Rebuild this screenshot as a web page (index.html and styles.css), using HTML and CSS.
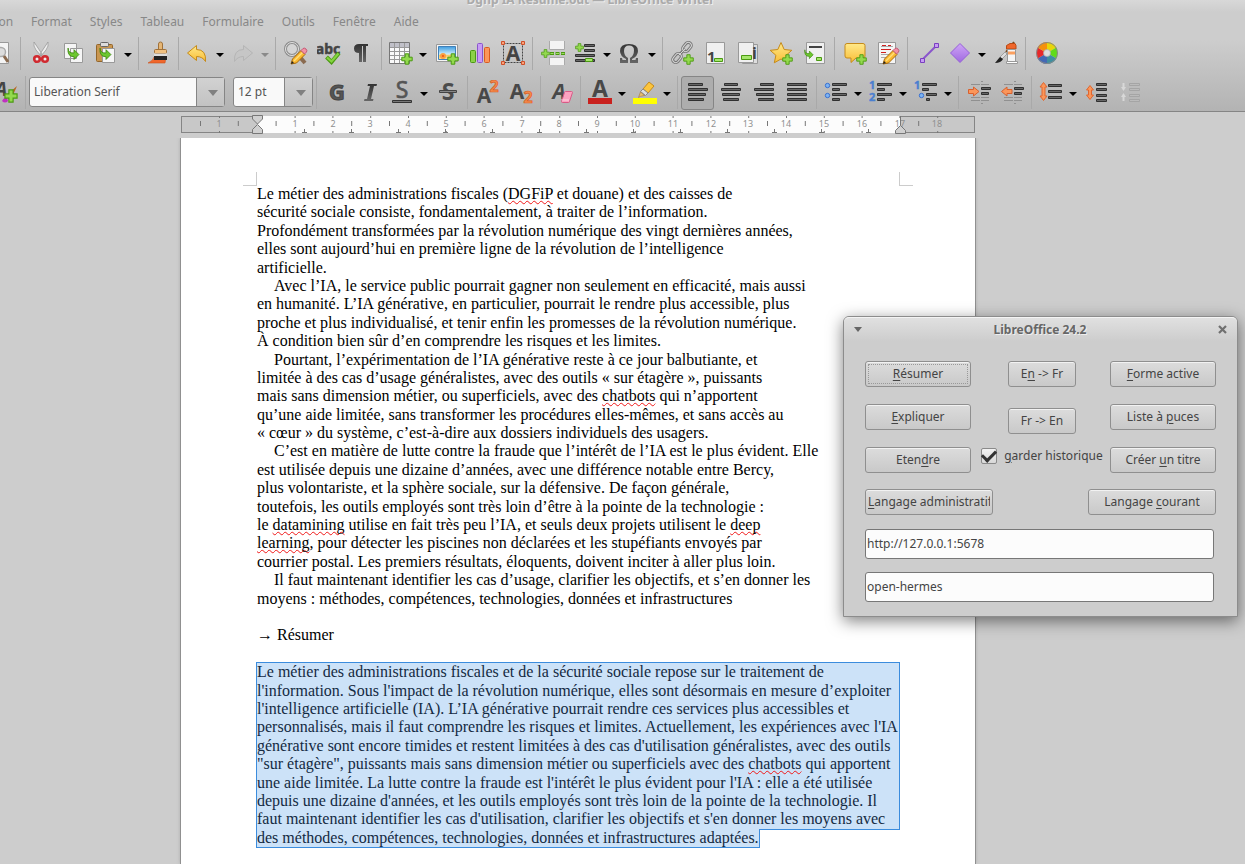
FILE: index.html
```html
<!DOCTYPE html>
<html lang="fr">
<head>
<meta charset="utf-8">
<title>Dgfip IA Résumé.odt — LibreOffice Writer</title>
<link rel="stylesheet" href="styles.css">
</head>
<body>
<svg class="sprite" aria-hidden="true">
  <defs>
    <linearGradient id="gDark" x1="0" y1="0" x2="0" y2="1"><stop offset="0" stop-color="#333"/><stop offset="1" stop-color="#666"/></linearGradient>
    <linearGradient id="gYellow" x1="0" y1="0" x2="0" y2="1"><stop offset="0" stop-color="#ffe98a"/><stop offset="1" stop-color="#f9bd36"/></linearGradient>
    <linearGradient id="gPurple" x1="0" y1="0" x2="0" y2="1"><stop offset="0" stop-color="#cfa5f7"/><stop offset="1" stop-color="#a06ae0"/></linearGradient>
    <linearGradient id="gSky" x1="0" y1="0" x2="0" y2="1"><stop offset="0" stop-color="#3c9be0"/><stop offset="0.6" stop-color="#cdeefb"/><stop offset="0.65" stop-color="#f8c860"/><stop offset="1" stop-color="#fbe3a0"/></linearGradient>
    <symbol id="plus" viewBox="0 0 12 12"><path d="M4.2.8h3.6v3.4h3.4v3.6H7.8v3.4H4.2V7.8H.8V4.2h3.4z" fill="#93d94e" stroke="#4b9a12"/></symbol>
    <symbol id="pencil" viewBox="0 0 18 18"><path d="M1 17l1.500-5L11 3.500l4 4L6.500 16z" fill="#fbb931" stroke="#a8690a"/><path d="M1 17l1-3 2 2z" fill="#222"/><path d="M4 14l8.500-8.500" stroke="#ffe07a" stroke-width="1.500"/><path d="M11 3.500l2-2q1.500-1 3 .5t.5 3l-2 2z" fill="#f291a5" stroke="#c45a75"/></symbol>
    <symbol id="garrow" viewBox="0 0 12 12"><path d="M1 1q0 5 5.500 4.500V2.500L11 7l-4.500 4.500V9Q0 9 1 1z" fill="#6cc72e" stroke="#3f8a10" stroke-width=".8"/></symbol>
    <symbol id="lines-left" viewBox="0 0 24 24"><g fill="#666" stroke="#303030"><path d="M2.500 3.500h14v2h-14zM2.500 8.500h19v2h-19zM2.500 13.500h17v2h-17zM2.500 18.500h15v2h-15z"/></g></symbol>
    <symbol id="lines-list" viewBox="0 0 24 24"><g fill="#666" stroke="#303030"><path d="M8.500 3.500h14v2h-14zM8.500 8.500h7v2h-7zM8.500 13.500h14v2h-14zM8.500 18.500h7v2h-7z"/></g></symbol>
  </defs>
</svg>

<div class="app">
  <header class="chrome">
    <h1 class="title">Dgfip IA Résumé.odt — LibreOffice Writer</h1>
    <nav class="menus" aria-label="Menus">
      <a href="#">Insertion</a><a href="#">Format</a><a href="#">Styles</a><a href="#">Tableau</a><a href="#">Formulaire</a><a href="#">Outils</a><a href="#">Fenêtre</a><a href="#">Aide</a>
    </nav>

    <div class="toolbar standard">
      <button class="tool" aria-label="Aperçu"><svg viewBox="0 0 24 24"><path d="M3.500 1.500h16v21h-16z" fill="#f4f4f4" stroke="#999"/><circle cx="12" cy="11" r="4.500" fill="#ddd" stroke="#aaa" stroke-width="1.500"/><path d="M15 15l4 6" stroke="#8a6b50" stroke-width="3"/></svg></button>
      <span class="sep"></span>
      <button class="tool" aria-label="Couper"><svg viewBox="0 0 24 24"><path d="M5 1q-1 4 2 8l5 6 1-2zM19 1q1 4-2 8l-5 6-1-2z" fill="#eee" stroke="#999" stroke-width=".8"/><circle cx="8" cy="18" r="2.800" fill="#eee" stroke="#d02a30" stroke-width="2.600"/><circle cx="16" cy="18" r="2.800" fill="#eee" stroke="#d02a30" stroke-width="2.600"/></svg></button>
      <button class="tool" aria-label="Copier"><svg viewBox="0 0 24 24"><path d="M2.500 2.500h12v15h-12zM8.500 7.500h12v14h-12z" fill="#f5f5f5" stroke="#999"/><use href="#garrow" x="5" y="6" width="13" height="13"/></svg></button>
      <div class="split"><button class="tool" aria-label="Coller"><svg viewBox="0 0 24 24"><rect x="2.500" y="3.500" width="16" height="17" rx="1" fill="#c99650" stroke="#93652a"/><rect x="6.500" y="1.500" width="8" height="4" rx="1" fill="#ddd" stroke="#666"/><path d="M8.500 7.500h12v14h-12z" fill="#f5f5f5" stroke="#999"/><use href="#garrow" x="5" y="6" width="13" height="13"/></svg></button><button class="drop" aria-label="Options de collage"></button></div>
      <span class="sep"></span>
      <button class="tool" aria-label="Cloner le formatage"><svg viewBox="0 0 24 24"><path d="M1 22q6-3 6-6h12l-1 6z" fill="#f0672c" stroke="#c9501c" stroke-width=".6"/><path d="M11.500 9V3q0-2 2-2t2 2v6" fill="#e6b674" stroke="#a0713a"/><rect x="7.500" y="8.500" width="12" height="4" rx="1" fill="#f0c080" stroke="#a0713a"/><path d="M7 12.500h13v3H7z" fill="#ddd"/><path d="M7 15h13v4H7z" fill="#222"/></svg></button>
      <span class="sep"></span>
      <div class="split"><button class="tool" aria-label="Annuler"><svg viewBox="0 0 24 24"><path d="M1.500 12l9-7.500v4q10 0 9 12-3-5-9-5v4z" fill="url(#gYellow)" stroke="#c58a1a"/></svg></button><button class="drop" aria-label="Historique d'annulation"></button></div>
      <div class="split off"><button class="tool" aria-label="Rétablir" disabled><svg viewBox="0 0 24 24"><path d="M21.500 12l-9-7.500v4q-10 0-9 12 3-5 9-5v4z" fill="#c6c6c6" stroke="#b5b5b5"/></svg></button><button class="drop" aria-label="Historique de rétablissement" disabled></button></div>
      <span class="sep"></span>
      <button class="tool" aria-label="Rechercher et remplacer"><svg viewBox="0 0 24 24"><path d="M15 15l6 7" stroke="#8a6b50" stroke-width="4"/><circle cx="8" cy="8" r="6.500" fill="#d5d5d5" stroke="#8c8c8c" stroke-width="3"/><circle cx="8" cy="8" r="6.500" fill="none" stroke="#e2e2e2"/><use href="#pencil" x="6" y="6" width="18" height="18"/></svg></button>
      <button class="tool" aria-label="Orthographe"><svg viewBox="0 0 24 24"><text x="11" y="13" text-anchor="middle" font-size="14" font-weight="700" fill="#444" stroke="#444" stroke-width=".5">abc</text><path d="M9.500 16l5 5L22 12" fill="none" stroke="#4b9a12" stroke-width="4"/><path d="M10 16.500l4.500 4L21.500 12.500" fill="none" stroke="#84d440" stroke-width="2.200"/></svg></button>
      <button class="tool" aria-label="Marques de formatage"><svg viewBox="0 0 24 24"><path d="M18 3v2h-2v16h-3V5h-1v16H9v-9Q4 12 4 7.500T9 3z" fill="url(#gDark)"/></svg></button>
      <span class="sep"></span>
      <div class="split"><button class="tool" aria-label="Insérer un tableau"><svg viewBox="0 0 24 24"><path d="M.5 1.500h20v21H.5z" fill="#fafafa" stroke="#777"/><path d="M1 2h19v4H1z" fill="#c0c0c8"/><path d="M1 6.500h19M1 10.500h19M1 14.500h19M1 18.500h19M5.500 2v20M10.500 2v20M15.500 2v20" stroke="#999"/><use href="#plus" x="12" y="12" width="12" height="12"/></svg></button><button class="drop" aria-label="Taille du tableau"></button></div>
      <button class="tool" aria-label="Insérer une image"><svg viewBox="0 0 24 24"><path d="M1.500 3.500h21v17h-21z" fill="#f5f5f5" stroke="#999"/><path d="M3.500 5.500h17v13h-17z" fill="url(#gSky)" stroke="#4180b8"/><circle cx="8" cy="15" r="2" fill="#f05010" stroke="#f9a040" stroke-width="2"/><use href="#plus" x="12" y="12" width="12" height="12"/></svg></button>
      <button class="tool" aria-label="Insérer un diagramme"><svg viewBox="0 0 24 24"><rect x="2.500" y="9.500" width="5" height="12" rx="1" fill="#8bd048" stroke="#4b9a12"/><rect x="9.500" y="2.500" width="5" height="19" rx="1" fill="#c79bf4" stroke="#8a55cc"/><rect x="16.500" y="6.500" width="5" height="15" rx="1" fill="#fb965a" stroke="#d85a20"/></svg></button>
      <button class="tool" aria-label="Zone de texte"><svg viewBox="0 0 24 24"><path d="M2.500 2.500h19v19h-19z" fill="none" stroke="#444" stroke-dasharray="2 1"/><text x="12" y="20" text-anchor="middle" font-size="21" font-weight="700" fill="#444">A</text><path d="M.5.5h3v3h-3zM20.500.5h3v3h-3zM.5 20.500h3v3h-3zM20.500 20.500h3v3h-3z" fill="#f9a27a" stroke="#d0502a"/></svg></button>
      <span class="sep"></span>
      <button class="tool" aria-label="Saut de page"><svg viewBox="0 0 24 24"><path d="M8.500 0v8.500h15V0M8.500 24v-7.500h15V24" fill="#f4f4f4" stroke="#aaa"/><path d="M9 12.500h15" stroke="#4b9a12" stroke-width="3" stroke-dasharray="4 1.500"/><path d="M9.500 12.500h14" stroke="#9ddc60" stroke-dasharray="3 2.500"/><use href="#plus" x="0" y="8" width="9" height="9"/></svg></button>
      <div class="split"><button class="tool" aria-label="Insérer un champ"><svg viewBox="0 0 24 24"><path d="M11.500 3.500h10v2h-10zM11.500 8.500h10v2h-10zM2.500 13.500h19v2h-19zM2.500 18.500h19v2h-19z" fill="#666" stroke="#303030"/><path d="M12.500 17.500h7v3h-7z" fill="#a5e66c" stroke="#4b9a12"/><use href="#plus" x="2" y="2" width="9" height="9"/></svg></button><button class="drop" aria-label="Autres champs"></button></div>
      <div class="split"><button class="tool" aria-label="Caractère spécial"><svg viewBox="0 0 24 24"><path d="M2 22v-5h2l.5 2h3.500v-1Q2 15 2 10 2 3 11 3t9 7q0 5-6 8v1h3.500l.5-2h2v5h-8v-5q4-2 4-8 0-4.500-5-4.500T6 10q0 5 4 7v5z" fill="url(#gDark)"/></svg></button><button class="drop" aria-label="Autres caractères"></button></div>
      <span class="sep"></span>
      <button class="tool" aria-label="Hyperlien"><svg viewBox="0 0 24 24"><g fill="none" stroke="#777" stroke-width="3"><rect x="11" y="3" width="10" height="6" rx="3" transform="rotate(-50 16 6)"/><rect x="1" y="14" width="10" height="6" rx="3" transform="rotate(-50 6 17)"/><path d="M8 14l6-6"/></g><g fill="none" stroke="#d8d8d8"><rect x="11" y="3" width="10" height="6" rx="3" transform="rotate(-50 16 6)"/><rect x="1" y="14" width="10" height="6" rx="3" transform="rotate(-50 6 17)"/><path d="M8 14l6-6"/></g><use href="#plus" x="12" y="13" width="11" height="11"/></svg></button>
      <button class="tool" aria-label="Note de bas de page"><svg viewBox="0 0 24 24"><path d="M2.500 1.500h18v21h-18z" fill="#f0f0f0" stroke="#999"/><text x="3" y="21" font-size="15" font-weight="700" fill="#444">1</text><path d="M10.500 17.500h8v3h-8z" fill="#a5e66c" stroke="#4b9a12"/></svg></button>
      <button class="tool" aria-label="Note de fin"><svg viewBox="0 0 24 24"><path d="M5.500 3.500h15v19h-15z" fill="#ddd" stroke="#999"/><path d="M1.500 1.500h15v20h-15z" fill="#f0f0f0" stroke="#999"/><text x="15" y="18" font-size="16" font-weight="700" fill="#444">i</text><path d="M4.500 14.500h10v4h-10z" fill="#a5e66c" stroke="#4b9a12"/></svg></button>
      <button class="tool" aria-label="Repère de texte"><svg viewBox="0 0 24 24"><path d="M11 1.500l3.200 7 7.600.8-5.700 5 1.600 7.500L11 18l-6.700 3.800 1.600-7.500-5.700-5 7.600-.8z" fill="url(#gYellow)" stroke="#c58a1a"/><use href="#plus" x="12" y="13" width="11" height="11"/></svg></button>
      <button class="tool" aria-label="Renvoi"><svg viewBox="0 0 24 24"><path d="M3.500 1.500h18v21h-18z" fill="#f0f0f0" stroke="#999"/><path d="M6 6h13" stroke="#444" stroke-width="2"/><path d="M13.500 16.500h5v3h-5z" fill="#a5e66c" stroke="#4b9a12"/><use href="#garrow" x="1" y="8" width="10" height="10"/></svg></button>
      <span class="sep"></span>
      <button class="tool" aria-label="Commentaire"><svg viewBox="0 0 24 24"><path d="M4 2.500h16q2 0 2 2V15q0 2-2 2h-7l-5 4.500V17H4q-2 0-2-2V4.500q0-2 2-2z" fill="url(#gYellow)" stroke="#c58a1a"/><use href="#plus" x="13" y="13" width="11" height="11"/></svg></button>
      <button class="tool" aria-label="Suivi des modifications"><svg viewBox="0 0 24 24"><path d="M2.500 1.500h17v21h-17z" fill="#f5f5f5" stroke="#999"/><path d="M5 5.500h12M5 13.500h10M5 16.500h6" stroke="#aaa"/><path d="M6 4.500h4M12 4.500h3M5 8.500h10M5 11.500h5" stroke="#d02020"/><use href="#pencil" x="6" y="6" width="18" height="18"/></svg></button>
      <span class="sep"></span>
      <button class="tool" aria-label="Ligne"><svg viewBox="0 0 24 24"><path d="M6 19L20 5" stroke="#8a55cc" stroke-width="2"/><path d="M4.500 17.500h4v4h-4zM18.500 2.500h4v4h-4z" fill="#c79bf4" stroke="#7a3fc0"/></svg></button>
      <div class="split"><button class="tool" aria-label="Formes de base"><svg viewBox="0 0 24 24"><path d="M12 2.500L21.500 12 12 21.500 2.500 12z" fill="url(#gPurple)" stroke="#9560d8"/></svg></button><button class="drop" aria-label="Autres formes"></button></div>
      <button class="tool" aria-label="Fonctions de dessin"><svg viewBox="0 0 24 24"><path d="M12 11l8-10" stroke="#7a4a20" stroke-width="2"/><path d="M12.500 8V4.500L16 2.500h5l1 2V8z" fill="#f0672c" stroke="#b84a14"/><path d="M13.500 8.500h8v12h-8z" fill="#f5f5f5" stroke="#999"/><path d="M14 10.500h7v3h-7z" fill="#fba060"/><path d="M12.500 20.500h11v2h-11z" fill="#fff" stroke="#999"/><path d="M6 16l5-5 2 2-5 5z" fill="#ddd" stroke="#888" stroke-width=".7"/><path d="M1 22q4-5 5-6l3 2q-2 4-8 4z" fill="#222"/></svg></button>
      <span class="sep"></span>
      <button class="tool" aria-label="Couleurs"><svg viewBox="0 0 24 24"><path d="M13 12V1a11 11 0 0 1 9.500 5.500z" fill="#e8d60a"/><path d="M13 12l9.500-5.500q2 5.500 0 11z" fill="#5fdc1a"/><path d="M13 12l9.500 5.500A11 11 0 0 1 13 23z" fill="#3f8fa0"/><path d="M13 12v11a11 11 0 0 1-9.500-5.500z" fill="#4468b4"/><path d="M13 12l-9.500 5.500q-2-5.500 0-11z" fill="#e8282a"/><path d="M13 12L3.500 6.500A11 11 0 0 1 13 1z" fill="#f5910c"/><circle cx="13" cy="12" r="10.500" fill="none" stroke="#888"/><circle cx="13" cy="12" r="3.500" fill="#ddd" stroke="#aaa" stroke-width=".7"/></svg></button>
    </div>

    <div class="toolbar formatting">
      <button class="tool" aria-label="Nouveau style"><svg viewBox="0 0 24 24"><text x="7" y="16" text-anchor="middle" font-size="20" font-weight="700" font-style="italic" fill="#444">A</text><path d="M14 14l9-8-4 9z" fill="#b8651c"/><path d="M8 21q2-4 5-3l1 3q-3 3-6 0z" fill="#c030c0"/><use href="#plus" x="10" y="9" width="14" height="14"/></svg></button>
      <span class="sep"></span>
      <div class="combo font-name"><select aria-label="Nom de police"><option>Liberation Serif</option></select></div>
      <div class="combo font-size"><select aria-label="Taille de police"><option>12 pt</option></select></div>
      <span class="sep"></span>
      <button class="tool" aria-label="Gras"><svg viewBox="0 0 24 24"><text x="12" y="20" text-anchor="middle" font-size="22" font-weight="700" fill="#555" stroke="#444">G</text></svg></button>
      <button class="tool" aria-label="Italique"><svg viewBox="0 0 24 24"><path d="M10 4h9l-.5 2H16l-3 13h2.500L15 21H6l.5-2H9l3-13H9.500z" fill="url(#gDark)"/></svg></button>
      <div class="split"><button class="tool" aria-label="Souligner"><svg viewBox="0 0 24 24"><text x="12" y="18" text-anchor="middle" font-size="23" fill="#555" stroke="#555" stroke-width=".6">S</text><path d="M2.500 20.500h19v2h-19z" fill="#777" stroke="#333"/></svg></button><button class="drop" aria-label="Type de soulignement"></button></div>
      <button class="tool" aria-label="Barrer"><svg viewBox="0 0 24 24"><text x="12" y="20" text-anchor="middle" font-size="23" font-weight="700" fill="#4c4c4c">S</text><path d="M3.500 10.500h17v2h-17z" fill="#888" stroke="#444"/></svg></button>
      <span class="sep"></span>
      <button class="tool" aria-label="Exposant"><svg viewBox="0 0 24 24"><text x="8" y="23" text-anchor="middle" font-size="21" font-weight="700" fill="#484848">A</text><text x="18" y="12" text-anchor="middle" font-size="16" font-weight="700" fill="#f58a4c" stroke="#d85a20" stroke-width=".7">2</text></svg></button>
      <button class="tool" aria-label="Indice"><svg viewBox="0 0 24 24"><text x="8" y="19" text-anchor="middle" font-size="21" font-weight="700" fill="#484848">A</text><text x="19" y="23" text-anchor="middle" font-size="16" font-weight="700" fill="#f58a4c" stroke="#d85a20" stroke-width=".7">2</text></svg></button>
      <span class="sep"></span>
      <button class="tool" aria-label="Effacer le formatage"><svg viewBox="0 0 24 24"><text x="10" y="19" text-anchor="middle" font-size="21" font-weight="700" font-style="italic" fill="#484848">A</text><path d="M16.500 11.500h6q1 0 1 1l-3 9q0 1-1 1h-6q-1 0-1-1l3-9q0-1 1-1z" fill="#fba3c0" stroke="#d85a86"/><path d="M13 20h7" stroke="#fdd5e2"/></svg></button>
      <span class="sep"></span>
      <div class="split"><button class="tool" aria-label="Couleur de police"><svg viewBox="0 0 24 24"><text x="12" y="17" text-anchor="middle" font-size="23" font-weight="700" fill="#484848">A</text><path d="M0 18h24v6H0z" fill="#c9211e"/></svg></button><button class="drop" aria-label="Choisir la couleur"></button></div>
      <div class="split"><button class="tool" aria-label="Surlignage"><svg viewBox="0 0 24 24"><path d="M10 9l6-7 5 4-6 7z" fill="#fcc53c" stroke="#c58a1a"/><path d="M10 9l5 4-2.500 2.500-5-4z" fill="#ddd" stroke="#888"/><path d="M7.500 12l4 3.500-4 .8-2 1.200z" fill="#e8c070" stroke="#a0713a" stroke-width=".6"/><path d="M0 18h24v6H0z" fill="#ff0"/></svg></button><button class="drop" aria-label="Choisir le surlignage"></button></div>
      <span class="sep"></span>
      <button class="tool on" aria-label="Aligner à gauche" aria-pressed="true"><svg viewBox="0 0 24 24"><use href="#lines-left"/></svg></button>
      <button class="tool" aria-label="Centrer"><svg viewBox="0 0 24 24"><path d="M5.500 3.500h13v2h-13zM2.500 8.500h19v2h-19zM3.500 13.500h17v2h-17zM4.500 18.500h15v2h-15z" fill="#666" stroke="#303030"/></svg></button>
      <button class="tool" aria-label="Aligner à droite"><svg viewBox="0 0 24 24"><path d="M8.500 3.500h13v2h-13zM2.500 8.500h19v2h-19zM4.500 13.500h17v2h-17zM6.500 18.500h15v2h-15z" fill="#666" stroke="#303030"/></svg></button>
      <button class="tool" aria-label="Justifier"><svg viewBox="0 0 24 24"><path d="M2.500 3.500h19v2h-19zM2.500 8.500h19v2h-19zM2.500 13.500h19v2h-19zM2.500 18.500h19v2h-19z" fill="#666" stroke="#303030"/></svg></button>
      <span class="sep"></span>
      <div class="split"><button class="tool" aria-label="Puces"><svg viewBox="0 0 24 24"><use href="#lines-list"/><g fill="#7db4f2" stroke="#3a70d0"><circle cx="3.500" cy="5.500" r="2.200"/><circle cx="3.500" cy="15.500" r="2.200"/></g></svg></button><button class="drop" aria-label="Style de puces"></button></div>
      <div class="split"><button class="tool" aria-label="Numérotation"><svg viewBox="0 0 24 24"><use href="#lines-list"/><g fill="#4a7fd0" stroke="#4a7fd0" stroke-width=".4" font-size="11" font-weight="700"><text x="0" y="9">1</text><text x="0" y="21">2</text></g></svg></button><button class="drop" aria-label="Style de numérotation"></button></div>
      <div class="split"><button class="tool" aria-label="Plan"><svg viewBox="0 0 24 24"><path d="M8.500 3.500h14v2h-14zM8.500 8.500h6v2h-6zM12.500 13.500h10v2h-10zM12.500 18.500h3v2h-3z" fill="#666" stroke="#303030"/><text x="0" y="9" fill="#4a7fd0" stroke="#4a7fd0" stroke-width=".4" font-size="11" font-weight="700">1</text><circle cx="7.500" cy="15.500" r="2.200" fill="#7db4f2" stroke="#3a70d0"/></svg></button><button class="drop" aria-label="Style de plan"></button></div>
      <span class="sep"></span>
      <button class="tool" aria-label="Augmenter le retrait"><svg viewBox="0 0 24 24"><path d="M4 4.500h9M14 4.500h8M4 17.500h9M14 17.500h8M4 20.500h9M14 20.500h8M14 1.500h2M14 23.500h2" stroke="#909090"/><path d="M14.500 7.500h9v2h-9zM14.500 12.500h7v2h-7z" fill="#666" stroke="#303030"/><path d="M1.500 9.500h5v-2.500l5.500 4.500-5.500 4.500v-2.500h-5z" fill="#fb965a" stroke="#d8602f"/></svg></button>
      <button class="tool" aria-label="Diminuer le retrait"><svg viewBox="0 0 24 24"><path d="M4 4.500h9M14 4.500h8M4 17.500h9M14 17.500h8M4 20.500h9M14 20.500h8M14 1.500h2M14 23.500h2" stroke="#909090"/><path d="M14.500 7.500h9v2h-9zM14.500 12.500h7v2h-7z" fill="#666" stroke="#303030"/><path d="M12 9.500H7v-2.500l-5.500 4.500L7 16v-2.500h5z" fill="#fb965a" stroke="#d8602f"/></svg></button>
      <span class="sep"></span>
      <div class="split"><button class="tool" aria-label="Interligne"><svg viewBox="0 0 24 24"><path d="M9.500 4.500h13v2h-13zM9.500 10.500h13v2h-13zM9.500 16.500h13v2h-13z" fill="#666" stroke="#303030"/><path d="M4.500 2.500l3.500 4.500H6v9h2l-3.500 4.500L1 16h2V7H1z" fill="#fb965a" stroke="#e0662f"/></svg></button><button class="drop" aria-label="Valeur d'interligne"></button></div>
      <button class="tool" aria-label="Espacement de paragraphe"><svg viewBox="0 0 24 24"><path d="M11.500 3.500h10v2h-10zM11.500 8.500h10v2h-10zM11.500 14.500h10v2h-10zM11.500 19.500h10v2h-10z" fill="#666" stroke="#303030"/><path d="M5 5.500L8.500 10h-2v5h2L5 19.500 1.500 15h2v-5h-2z" fill="#fb965a" stroke="#e0662f"/></svg></button>
      <button class="tool" aria-label="Diminuer l'espacement" disabled><svg viewBox="0 0 24 24"><path d="M11.500 3.500h10v2h-10zM11.500 8.500h10v2h-10zM11.500 14.500h10v2h-10zM11.500 19.500h10v2h-10z" fill="#bbb" stroke="#a5a5a5"/><path d="M5.500 3v5M5.500 21v-5" stroke="#d8d8d8" stroke-width="2"/><path d="M3 7h5l-2.500 4zM3 17h5l-2.500-4z" fill="#d8d8d8"/></svg></button>
    </div>
  </header>

  <main class="workspace">
    <svg class="ruler" viewBox="0 0 794 18" aria-hidden="true">
      <rect x=".5" y=".5" width="793" height="16" fill="#c8c8c8" stroke="#858585"/>
      <path d="M76 0h643v17H76z" fill="#fcfcfc"/>
      <g fill="none" stroke="#777">
        <path d="M19 7.500h42M94.600 7.500h680" stroke-width="5" stroke-dasharray="1 36.800"/>
        <path d="M38 1h22M113.600 1h660M38 16h22M113.600 16h660" stroke-width="2" stroke-dasharray="1 36.800"/>
        <path d="M123 14.500h590" stroke-width="3" stroke-dasharray="1 46"/>
        <path d="M121 16.500h590" stroke-dasharray="5 42"/>
      </g>
      <g class="ruler-text">
        <text x="38" y="11">1</text><text x="114" y="11">1</text><text x="152" y="11">2</text><text x="189" y="11">3</text><text x="227" y="11">4</text><text x="265" y="11">5</text><text x="303" y="11">6</text><text x="341" y="11">7</text><text x="378" y="11">8</text><text x="416" y="11">9</text><text x="454" y="11">10</text><text x="492" y="11">11</text><text x="530" y="11">12</text><text x="567" y="11">13</text><text x="605" y="11">14</text><text x="643" y="11">15</text><text x="681" y="11">16</text><text x="719" y="11">17</text><text x="756" y="11">18</text>
      </g>
      <g fill="#d0d0d0" stroke="#777"><path d="M71.500-.5h10V3l-5 5-5-5zM76.500 8.500l5 5v4h-10v-4zM719.500 9.500l5 5v3h-10v-3z"/><path d="M719.500 0v9.500"/></g>
    </svg>

    <article class="page">
      <span class="crop left"></span><span class="crop right"></span>
      <p>Le métier des administrations fiscales (<span class="typo">DGFiP</span> et douane) et des caisses de<br>sécurité sociale consiste, fondamentalement, à traiter de l’information.<br>Profondément transformées par la révolution numérique des vingt dernières années,<br>elles sont aujourd’hui en première ligne de la révolution de l’intelligence<br>artificielle.</p>
      <p class="indent">Avec l’IA, le service public pourrait gagner non seulement en efficacité, mais aussi<br>en humanité. L’IA générative, en particulier, pourrait le rendre plus accessible, plus<br>proche et plus individualisé, et tenir enfin les promesses de la révolution numérique.<br>À condition bien sûr d’en comprendre les risques et les limites.</p>
      <p class="indent">Pourtant, l’expérimentation de l’IA générative reste à ce jour balbutiante, et<br>limitée à des cas d’usage généralistes, avec des outils « sur étagère », puissants<br>mais sans dimension métier, ou superficiels, avec des <span class="typo">chatbots</span> qui n’apportent<br>qu’une aide limitée, sans transformer les procédures elles-mêmes, et sans accès au<br>« cœur » du système, c’est-à-dire aux dossiers individuels des usagers.</p>
      <p class="indent">C’est en matière de lutte contre la fraude que l’intérêt de l’IA est le plus évident. Elle<br>est utilisée depuis une dizaine d’années, avec une différence notable entre Bercy,<br>plus volontariste, et la sphère sociale, sur la défensive. De façon générale,<br>toutefois, les outils employés sont très loin d’être à la pointe de la technologie :<br>le <span class="typo">datamining</span> utilise en fait très peu l’IA, et seuls deux projets utilisent le <span class="typo">deep</span><br><span class="typo">learning</span>, pour détecter les piscines non déclarées et les stupéfiants envoyés par<br>courrier postal. Les premiers résultats, éloquents, doivent inciter à aller plus loin.</p>
      <p class="indent">Il faut maintenant identifier les cas d’usage, clarifier les objectifs, et s’en donner les<br>moyens : méthodes, compétences, technologies, données et infrastructures</p>
      <p><br></p>
      <p>→ Résumer</p>
      <p><br></p>
      <div class="selection">
        <p class="selected">Le métier des administrations fiscales et de la sécurité sociale repose sur le traitement de<br>l'information. Sous l'impact de la révolution numérique, elles sont désormais en mesure d’exploiter<br>l'intelligence artificielle (IA). L’IA générative pourrait rendre ces services plus accessibles et<br>personnalisés, mais il faut comprendre les risques et limites. Actuellement, les expériences avec l'IA<br>générative sont encore timides et restent limitées à des cas d'utilisation généralistes, avec des outils<br>"sur étagère", puissants mais sans dimension métier ou superficiels avec des <span class="typo">chatbots</span> qui apportent<br>une aide limitée. La lutte contre la fraude est l'intérêt le plus évident pour l'IA : elle a été utilisée<br>depuis une dizaine d'années, et les outils employés sont très loin de la pointe de la technologie. Il<br>faut maintenant identifier les cas d'utilisation, clarifier les objectifs et s'en donner les moyens avec</p>
        <p class="selected tail">des méthodes, compétences, technologies, données et infrastructures adaptées.</p>
      </div>
    </article>
  </main>

  <section class="dialog" role="dialog" aria-labelledby="dialog-title">
    <header class="dialog-bar">
      <button aria-label="Menu"><svg width="8" height="5" viewBox="0 0 8 5"><path d="M0 0h8L4 5z" fill="#666"/></svg></button>
      <h2 id="dialog-title">LibreOffice 24.2</h2>
      <button aria-label="Fermer"><svg width="9" height="9" viewBox="0 0 9 9"><path d="M1 1l7 7M8 1L1 8" stroke="#707070" stroke-width="2.200"/></svg></button>
    </header>
    <form class="dialog-body">
      <div class="actions">
        <div class="column">
          <button type="button" class="btn focused"><span><u>R</u>ésumer</span></button>
          <button type="button" class="btn"><span><u>E</u>xpliquer</span></button>
          <button type="button" class="btn"><span>Eten<u>d</u>re</span></button>
        </div>
        <div class="column middle">
          <button type="button" class="btn"><span>E<u>n</u> -&gt; Fr</span></button>
          <button type="button" class="btn"><span>Fr -&gt; En</span></button>
          <label class="check"><input type="checkbox" checked><span><u>g</u>arder historique</span></label>
        </div>
        <div class="column">
          <button type="button" class="btn"><span><u>F</u>orme active</span></button>
          <button type="button" class="btn"><span>Liste à <u>p</u>uces</span></button>
          <button type="button" class="btn"><span>Créer <u>u</u>n titre</span></button>
        </div>
      </div>
      <div class="wide-actions">
        <button type="button" class="btn"><span><u>L</u>angage administratif</span></button>
        <button type="button" class="btn"><span>Langage <u>c</u>ourant</span></button>
      </div>
      <input class="field" type="text" aria-label="Adresse du serveur" value="http://127.0.0.1:5678">
      <input class="field" type="text" aria-label="Modèle" value="open-hermes">
    </form>
  </section>
</div>
</body>
</html>
```
FILE: styles.css
```css
* { box-sizing: border-box; }

body {
  margin: 0;
  background: #cdcdcd;
  color: #444;
  font: 12px/16px "Noto Sans", "Open Sans", sans-serif;
}

button, input, select { margin: 0; color: inherit; font: inherit; }
.sprite { position: absolute; width: 0; height: 0; }

.app {
  position: relative;
  display: flex;
  flex-direction: column;
  height: 100vh;
  overflow: hidden;
}

/* Title, menus and toolbars */
.chrome {
  flex: none;
  height: 112px;
  border-bottom: 1px solid #858585;
  background: linear-gradient(#d8d8d8, #cdcdcd 12px, #cdcdcd 40px, #b3b3b3);
}
.title {
  display: flex;
  align-items: flex-end;
  justify-content: center;
  height: 9px;
  margin: 0 64px 0 0;
  overflow: hidden;
  color: #aaa;
  font-size: 12px;
  font-weight: 700;
  line-height: 19px;
  white-space: nowrap;
  text-shadow: 1px 1px 0 #eee;
}
.menus {
  display: flex;
  gap: 18px;
  height: 28px;
  margin-left: -38px;
  padding-top: 5px;
}
.menus a { color: #888; text-decoration: none; }

.toolbar { display: flex; align-items: center; height: 33px; }
.standard { margin-left: -16px; }
.formatting { margin: 6px 0 0 -11px; }
.toolbar > * { flex: none; }
.toolbar text { font-family: "Noto Sans", sans-serif; }

.sep { display: flex; justify-content: center; width: 7px; height: 33px; }
.sep::before { content: ""; width: 1px; background: #a9a9a9; }

.tool {
  display: flex;
  align-items: center;
  justify-content: center;
  width: 33px;
  height: 34px;
  padding: 0 0 2px;
  border: 1px solid transparent;
  border-radius: 3px;
  background: none;
}
.tool svg { flex: none; width: 24px; height: 24px; }
.tool.on { border-color: #858585; background: #adadad; }

.split { display: flex; }
.split .tool { width: 31px; }
.drop {
  display: flex;
  align-items: center;
  justify-content: center;
  width: 14px;
  padding: 3px 0 0;
  border: 0;
  background: none;
}
.drop::before {
  content: "";
  border: 4px solid transparent;
  border-top-color: #000;
  border-bottom: 0;
}
.off .drop::before { border-top-color: #8a8a8a; }

.combo {
  position: relative;
  height: 30px;
  margin-bottom: 1px;
  border: 1px solid #858585;
  border-radius: 3px;
  background: #f9f9f9;
}
.combo select {
  width: 100%;
  height: 100%;
  padding: 0 32px 0 4px;
  border: 0;
  background: none;
  color: #555;
  appearance: none;
}
.combo::before {
  content: "";
  position: absolute;
  inset: 0 0 0 auto;
  width: 27px;
  border-left: 1px solid #858585;
  background: linear-gradient(#d2d2d2, #c2c2c2);
}
.combo::after {
  content: "";
  position: absolute;
  top: 12px;
  right: 6px;
  border: 5px solid transparent;
  border-top: 6px solid #808080;
  border-bottom: 0;
}
.font-name { width: 196px; margin-right: 8px; }
.font-size { width: 80px; }

/* Ruler and page */
.workspace {
  display: flex;
  flex: 1;
  flex-direction: column;
  gap: 4px;
  min-height: 0;
  padding: 4px 0 0 181px;
  background: #cdcdcd;
}
.ruler { flex: none; width: 794px; height: 18px; overflow: visible; }
.ruler-text { fill: #909090; font-size: 9px; text-anchor: middle; }

.page {
  position: relative;
  flex: 1;
  width: 794px;
  padding: 47px 75px 0 76px;
  background: #fff;
  box-shadow: 0 0 0 1px #909090, 0 0 4px #999;
  clip-path: inset(0 -5px 0 -5px);
  color: #000;
  font-family: "Liberation Serif", serif;
  font-size: 16px;
  line-height: 1.15;
  white-space: nowrap;
}
.page p { margin: 0; }
.page .indent { text-indent: 17px; }
.typo {
  text-decoration: underline wavy #f01818 1px;
  text-decoration-skip-ink: none;
  text-underline-offset: 1px;
}
.crop {
  position: absolute;
  top: 34px;
  width: 14px;
  height: 14px;
  border: 0 solid #ccc;
  border-bottom-width: 1px;
}
.crop.left { left: 62px; border-right-width: 1px; }
.crop.right { right: 62px; border-left-width: 1px; }

.selection { margin: -1px 0 0 -1px; color: #142a42; }
.page .selected { border: 1px solid #3b8cdd; background: #cce2f8; }
.page .tail {
  position: relative;
  width: fit-content;
  margin-top: -1px;
  border-top: 0;
}

/* Assistant dialog */
.dialog {
  position: absolute;
  top: 316px;
  right: 7px;
  width: 395px;
  border: 1px solid #8c8c8c;
  border-radius: 6px 6px 0 0;
  background: #cdcdcd;
  box-shadow: 0 4px 16px rgba(0, 0, 0, 0.5);
}
.dialog-bar {
  display: flex;
  align-items: center;
  justify-content: space-between;
  height: 24px;
  padding: 0 10px;
  border-top: 1px solid #f4f4f4;
  border-radius: 5px 5px 0 0;
  background: linear-gradient(#e0e0e0, #cdcdcd);
}
.dialog-bar h2 {
  margin: 0;
  color: #666;
  font-size: 12px;
  font-weight: 700;
  text-shadow: 1px 1px 0 #eee;
}
.dialog-bar button { display: flex; padding: 0; border: 0; background: none; }
.dialog-body {
  display: flex;
  flex-direction: column;
  padding: 20px 21px 14px;
}
.actions { display: flex; justify-content: space-between; }
.column { display: flex; flex-direction: column; gap: 17px; width: 106px; }
.middle { gap: 21px; align-items: center; width: auto; padding-left: 3px; }
.middle .btn { width: 68px; }
.btn {
  display: flex;
  align-items: center;
  justify-content: center;
  height: 26px;
  padding: 0 2px;
  border: 1px solid #8f8f8f;
  border-radius: 3px;
  background: linear-gradient(#dcdcdc, #c9c9c9);
  box-shadow: inset 0 1px 0 #f2f2f2;
  white-space: nowrap;
  overflow: hidden;
}
.focused { outline: 1px dotted #999; outline-offset: -4px; }
u { text-underline-offset: 2px; }
.check { display: flex; align-items: center; gap: 7px; margin-top: -7px; }
.check input {
  display: grid;
  place-items: center;
  width: 16px;
  height: 16px;
  border: 1px solid #8a8a8a;
  border-radius: 2px;
  background: linear-gradient(#f2f2f2, #d8d8d8);
  appearance: none;
}
.check input:checked::before {
  content: "";
  width: 11px;
  height: 6px;
  border: solid #333;
  border-width: 0 0 3px 3px;
  transform: translateY(-2px) rotate(-45deg);
}
.wide-actions { display: flex; justify-content: space-between; margin: 16px 0 14px; }
.wide-actions .btn { width: 128px; }
.wide-actions .btn span { overflow: hidden; }
.field {
  height: 30px;
  margin-right: 2px;
  padding: 0 1px 2px;
  border: 1px solid #777;
  border-radius: 3px;
  background: #fcfcfc;
}
.field + .field { margin-top: 13px; }
```
